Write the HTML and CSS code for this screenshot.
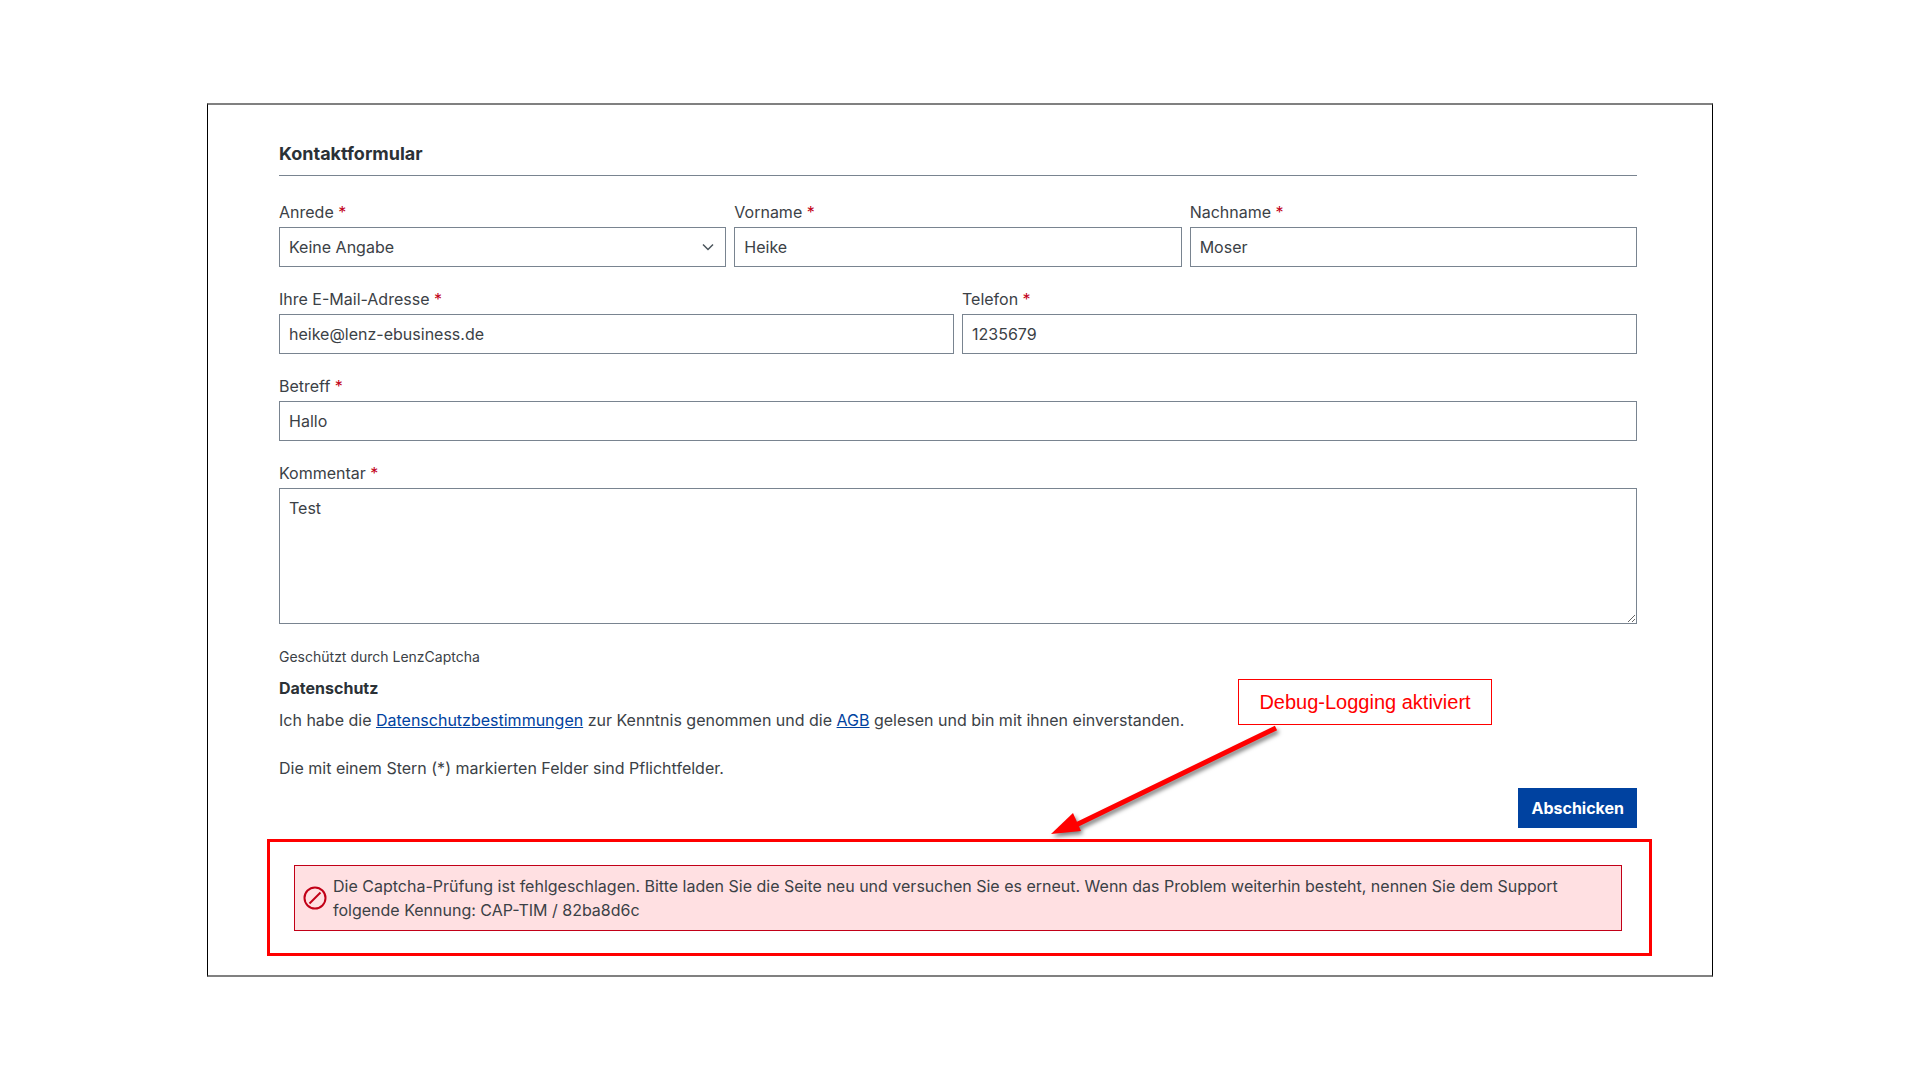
FILE: index.html
```
<!DOCTYPE html>
<html lang="de">
<head>
<meta charset="UTF-8">
<meta name="viewport" content="width=device-width, initial-scale=1.0">
<title>Kontaktformular</title>
<link rel="stylesheet" href="styles.css">
</head>
<body>

<main class="page">
  <form class="contact-form">
    <h1>Kontaktformular</h1>

    <div class="form-row">
      <div class="field">
        <label for="salutation">Anrede <span class="required">*</span></label>
        <div class="select-wrap">
          <select id="salutation" name="salutation">
            <option>Keine Angabe</option>
            <option>Frau</option>
            <option>Herr</option>
          </select>
          <svg class="chevron" viewBox="0 0 12 8" aria-hidden="true"><path d="M1 1.5L6 6.5L11 1.5"/></svg>
        </div>
      </div>
      <div class="field">
        <label for="firstName">Vorname <span class="required">*</span></label>
        <input type="text" id="firstName" name="firstName" value="Heike">
      </div>
      <div class="field">
        <label for="lastName">Nachname <span class="required">*</span></label>
        <input type="text" id="lastName" name="lastName" value="Moser">
      </div>
    </div>

    <div class="form-row">
      <div class="field">
        <label for="email">Ihre E-Mail-Adresse <span class="required">*</span></label>
        <input type="email" id="email" name="email" value="heike@lenz-ebusiness.de">
      </div>
      <div class="field">
        <label for="phone">Telefon <span class="required">*</span></label>
        <input type="tel" id="phone" name="phone" value="1235679">
      </div>
    </div>

    <div class="form-row">
      <div class="field">
        <label for="subject">Betreff <span class="required">*</span></label>
        <input type="text" id="subject" name="subject" value="Hallo">
      </div>
    </div>

    <div class="form-row">
      <div class="field">
        <label for="comment">Kommentar <span class="required">*</span></label>
        <textarea id="comment" name="comment">Test</textarea>
      </div>
    </div>

    <p class="captcha-note">Geschützt durch LenzCaptcha</p>

    <h2>Datenschutz</h2>
    <p class="privacy">Ich habe die <a href="#">Datenschutzbestimmungen</a> zur Kenntnis genommen und die <a href="#">AGB</a> gelesen und bin mit ihnen einverstanden.</p>
    <p class="required-note">Die mit einem Stern (*) markierten Felder sind Pflichtfelder.</p>

    <div class="actions">
      <button type="button">Abschicken</button>
    </div>

    <div class="highlight">
      <div class="alert" role="alert">
        <svg class="alert-icon" viewBox="0 0 24 24" aria-hidden="true">
          <circle cx="12" cy="12" r="10.5"/>
          <path d="M6.5 17.5L17.5 6.5"/>
        </svg>
        <p>Die Captcha-Prüfung ist fehlgeschlagen. Bitte laden Sie die Seite neu und versuchen Sie es erneut. Wenn das Problem weiterhin besteht, nennen Sie dem Support folgende Kennung: CAP-TIM / 82ba8d6c</p>
      </div>

      <!-- note with arrow above the message -->
      <div class="callout">
        <div class="callout-text">Debug-Logging aktiviert</div>
        <svg class="callout-arrow" viewBox="0 0 240 120" aria-hidden="true">
          <path d="M226 3L26 100"/>
          <polygon points="1,109 23,88 31,106"/>
        </svg>
      </div>
    </div>
  </form>
</main>

</body>
</html>
```

FILE: styles.css
```
* {
    box-sizing: border-box;
}

body {
    margin: 0;
    background-color: #fff;
    color: #3b4146;
    font-family: Inter, sans-serif;
    font-size: 16px;
    line-height: 24px;
}

.page {
    max-width: 1570px;
    margin: 0 auto;
    padding: 103px 32px;
}

.contact-form {
    padding: 35px 75px 19px 71px;
    border: 1px solid #000;
    border-top: 2px solid #808080;
    border-bottom: 2px solid #808080;
}

h1 {
    margin: 0 0 24px;
    padding-bottom: 8px;
    border-bottom: 1px solid #798490;
    color: #2b3136;
    font-size: 18px;
    line-height: 27px;
    font-weight: 700;
}

h2 {
    margin: 9px 0 8px;
    color: #2b3136;
    font-size: 16px;
    font-weight: 700;
}

p {
    margin: 0;
}

a {
    color: #0042a0;
}

.form-row {
    display: flex;
    gap: 8px;
    margin-bottom: 20px;
}

.field {
    flex: 1;
    min-width: 0;
}

label {
    display: block;
    margin-bottom: 3px;
}

.required {
    color: #c20017;
}

input,
select,
textarea {
    display: block;
    width: 100%;
    height: 40px;
    padding: 7px 9px;
    border: 1px solid #798490;
    border-radius: 0;
    background-color: #fff;
    color: inherit;
    font: inherit;
}

textarea {
    height: 136px;
    resize: vertical;
}

select {
    appearance: none;
}

.select-wrap {
    position: relative;
}

.chevron {
    position: absolute;
    top: 16px;
    right: 12px;
    width: 12px;
    height: 8px;
    fill: none;
    stroke: #4a545b;
    stroke-width: 1.5;
    pointer-events: none;
}

.captcha-note {
    margin-top: 22px;
    font-size: 14px;
    line-height: 21px;
}

.privacy {
    margin-bottom: 24px;
}

.actions {
    display: flex;
    justify-content: flex-end;
    margin: 8px 0 11px;
}

button {
    height: 40px;
    padding: 0 13px;
    border: none;
    background-color: #0042a0;
    color: #fff;
    font: inherit;
    font-weight: 700;
    cursor: pointer;
}

.highlight {
    position: relative;
    margin: 0 -15px 0 -12px;
    padding: 23px 27px 22px 24px;
    border: 3px solid #f00;
}

.alert {
    display: flex;
    align-items: center;
    gap: 6px;
    padding: 8px;
    border: 1px solid #c20017;
    background-color: #ffe0e2;
}

.alert-icon {
    flex: none;
    width: 24px;
    height: 24px;
    fill: none;
    stroke: #c20017;
    stroke-width: 2;
}

.callout {
    position: absolute;
    right: 157px;
    bottom: 108px;
    width: 442px;
}

.callout-text {
    width: 254px;
    margin-left: auto;
    padding: 10px 0;
    border: 1px solid #f00;
    color: #f00;
    font-family: "Liberation Sans", Arial, sans-serif;
    font-size: 20px;
    text-align: center;
}

.callout-arrow {
    display: block;
    width: 240px;
    height: 120px;
    fill: #f00;
    filter: drop-shadow(2px 3px 2px rgba(0, 0, 0, 0.5));
}

.callout-arrow path {
    stroke: #f00;
    stroke-width: 5;
}
```
